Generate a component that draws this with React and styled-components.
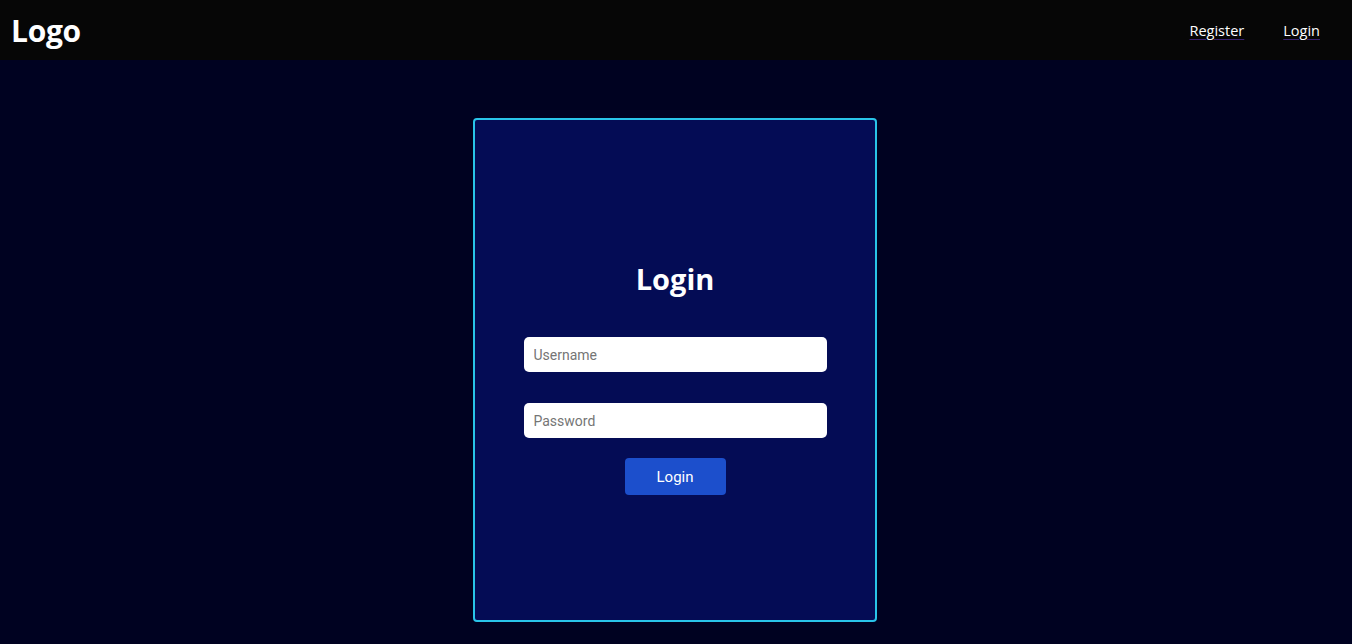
import React from 'react'
import styled, { createGlobalStyle } from 'styled-components'

const GlobalStyle = createGlobalStyle`
  * {
    box-sizing: border-box;
  }

  body {
    margin: 0;
    background: #000221;
    font-family: 'Open Sans', 'Noto Sans', sans-serif;
  }
`

const Page = styled.div`
  min-height: 644px;
  display: flex;
  flex-direction: column;
`

const Header = styled.header`
  height: 60px;
  background: #060606;
  display: flex;
  align-items: center;
  justify-content: space-between;
  padding: 0 32px 0 11px;
`

const Brand = styled.div`
  color: #fff;
  font-size: 30px;
  font-weight: 700;
  letter-spacing: -0.3px;
`

const Nav = styled.nav`
  display: flex;
  gap: 39px;
`

const NavLink = styled.a`
  color: #fff;
  font-size: 14.5px;
  text-decoration: underline;
  text-decoration-color: #3a2370;
  text-underline-offset: 3px;
`

const Main = styled.main`
  display: flex;
  justify-content: center;
  padding: 58px 2px 0 0;
`

const Card = styled.div`
  width: 404px;
  height: 504px;
  background: #040c55;
  border: 2px solid #29c4e9;
  border-radius: 4px;
  display: flex;
  flex-direction: column;
  align-items: center;
  justify-content: center;
  padding-top: 16px;
`

const Title = styled.h1`
  margin: 0 0 40px;
  color: #fff;
  font-size: 29px;
  line-height: 36px;
  font-weight: 700;
`

const Form = styled.form`
  display: flex;
  flex-direction: column;
  align-items: center;
`

const Input = styled.input`
  width: 303px;
  height: 35px;
  border: none;
  border-radius: 5px;
  background: #fff;
  padding: 0 10px;
  font-family: Roboto, 'Liberation Sans', sans-serif;
  font-size: 14px;
  margin-bottom: ${p => p.$gap}px;
  outline: none;

  &::placeholder {
    color: #757575;
  }
`

const Button = styled.button`
  width: 101px;
  height: 37px;
  border: none;
  border-radius: 4px;
  background: #1c4fcc;
  color: #fff;
  font-family: Roboto, 'Liberation Sans', sans-serif;
  font-size: 15px;
  cursor: pointer;
`

const App = () => {
  return (
    <Page>
      <GlobalStyle />
      <Header>
        <Brand>Logo</Brand>
        <Nav>
          <NavLink href="#register">Register</NavLink>
          <NavLink href="#login">Login</NavLink>
        </Nav>
      </Header>
      <Main>
        <Card>
          <Title>Login</Title>
          <Form onSubmit={e => e.preventDefault()}>
            <Input type="text" placeholder="Username" $gap={31} />
            <Input type="password" placeholder="Password" $gap={20} />
            <Button type="submit">Login</Button>
          </Form>
        </Card>
      </Main>
    </Page>
  )
}

export default App
